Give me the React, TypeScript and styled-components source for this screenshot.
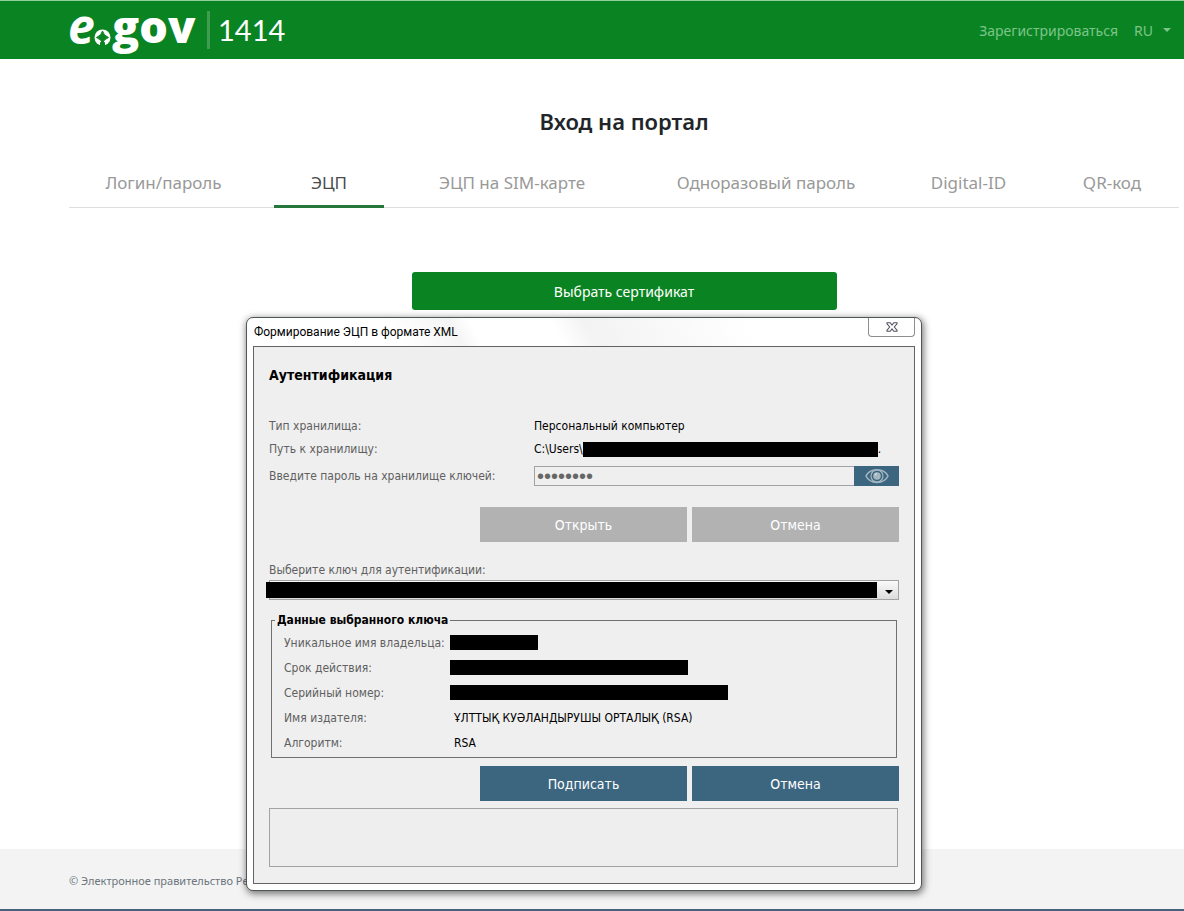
import React from "react";
import styled, { createGlobalStyle } from "styled-components";

const siteFont = `"Noto Sans", "Open Sans", sans-serif`;
const dialogFont = `"DejaVu Sans Condensed", "DejaVu Sans", sans-serif`;
const green = "#0a8422";
const steel = "#3c6680";

const GlobalStyle = createGlobalStyle`
  *, *::before, *::after { box-sizing: border-box; }
  body { margin: 0; background: #fff; font-family: ${siteFont}; }
  button, input, select, textarea { font: inherit; border-radius: 0; margin: 0; }
`;

const Page = styled.div`
  position: relative;
  display: flex;
  flex-direction: column;
  min-height: 100vh;
`;

const Header = styled.header`
  display: flex;
  align-items: center;
  justify-content: space-between;
  height: 59px;
  padding: 0 13px 0 69px;
  background: ${green};
  border-top: 1px solid #8fcf9b;
`;

const Brand = styled.a`
  display: flex;
  align-items: center;
  color: #fff;
  text-decoration: none;
`;

const Logo = styled.svg`
  display: block;
  width: 138px;
  height: 58px;
  overflow: visible;
`;

const Hotline = styled.span`
  padding-left: 8px;
  border-left: 3px solid #3f9c50;
  font-family: Lato, sans-serif;
  font-size: 29px;
  line-height: 38px;
`;

const UserNav = styled.nav`
  display: flex;
  align-items: center;
  gap: 16px;
  font-size: 14px;
`;

const NavLink = styled.a`
  color: #7cc489;
  text-decoration: none;
`;

const LangButton = styled.button`
  display: flex;
  align-items: center;
  gap: 10px;
  padding: 0;
  border: 0;
  background: none;
  color: #7cc489;
`;

const Caret = styled.span`
  border: 4px solid transparent;
  border-top-color: currentColor;
  border-bottom: 0;
`;

const Main = styled.main`
  flex: 1;
  padding: 46px 5px 0 69px;
`;

const Title = styled.h1`
  margin: 0;
  color: #212529;
  font-size: 22px;
  font-weight: 600;
  line-height: 32px;
  text-align: center;
`;

const Tabs = styled.nav`
  display: flex;
  margin-top: 22px;
  border-bottom: 1px solid #dedede;
`;

const Tab = styled.a<{ $share: number; $gap?: boolean; $active?: boolean }>`
  flex: ${(p) => p.$share} 1 0;
  margin: 0 ${(p) => (p.$gap ? 16 : 0)}px -1px 0;
  padding: 5px 0 3px;
  border-bottom: 3px solid ${(p) => (p.$active ? "#25773a" : "transparent")};
  color: ${(p) => (p.$active ? "#4a4a4a" : "#999")};
  font-size: 17px;
  line-height: 38px;
  text-align: center;
  text-decoration: none;
  white-space: nowrap;
`;

const CertButton = styled.button`
  display: block;
  width: 425px;
  max-width: 100%;
  height: 38px;
  margin: 64px auto 0;
  border: 0;
  border-radius: 3px;
  background: ${green};
  color: #fff;
  font-size: 14px;
`;

const Footer = styled.footer`
  padding: 20px 69px 16px;
  background: #f3f3f3;
  border-bottom: 2px solid #48617c;
  color: #6c757d;
  font-size: 11px;
  line-height: 24px;
`;

const Dialog = styled.section`
  position: absolute;
  top: 317px;
  left: 246px;
  width: 676px;
  padding: 0 6px 6px;
  border: 1px solid #4e5657;
  border-radius: 7px;
  background: #fff;
  box-shadow: 1px 2px 7px 1px rgba(0, 0, 0, 0.5);
  color: #000;
  font-family: ${dialogFont};
  font-size: 12px;
`;

const TitleBar = styled.div`
  display: flex;
  align-items: flex-start;
  justify-content: space-between;
  height: 28px;
  background: linear-gradient(60deg, #fff 22%, #f5f5f5 31%, #fff 34%, #fff 46%, #f3f3f3 51%, #fff 75%);
`;

const DialogTitle = styled.h2`
  margin: 0;
  padding-left: 1px;
  font-family: Roboto, "Open Sans", sans-serif;
  font-size: 12px;
  font-weight: 400;
  line-height: 28px;
`;

const CloseButton = styled.button`
  display: grid;
  place-items: center;
  width: 47px;
  height: 19px;
  padding: 0;
  border: 1px solid #8e8e8e;
  border-top: 0;
  && { border-radius: 0 0 4px 4px; }
  background: #fff;
`;

const Panel = styled.div`
  padding: 14px 15px 16px;
  border: 1px solid #636363;
  background: #efefef;
`;

const Heading = styled.h3`
  margin: 0 0 25px;
  font-size: 14px;
  line-height: 28px;
`;

const Field = styled.div<{ $height: number; $top?: number }>`
  display: grid;
  grid-template-columns: 265px 1fr;
  align-items: center;
  height: ${(p) => p.$height}px;
  margin-top: ${(p) => p.$top ?? 0}px;
`;

const Label = styled.label`
  color: #606060;
  line-height: 18px;
  white-space: nowrap;
`;

const Value = styled.span`
  display: flex;
  align-items: center;
  white-space: nowrap;
`;

const Redaction = styled.span<{ $width: number }>`
  width: ${(p) => p.$width}px;
  height: 15px;
  background: #000;
`;

const PasswordBox = styled.div`
  display: flex;
  height: 20px;
`;

const PasswordInput = styled.input`
  flex: 1;
  min-width: 0;
  padding: 0 2px;
  border: 1px solid #a3a3a3;
  border-right: 0;
  background: #efefef;
  color: #666;
  font-family: "Liberation Sans", sans-serif;
  font-size: 20px;
`;

const EyeButton = styled.button`
  display: grid;
  place-items: center;
  width: 45px;
  padding: 0;
  border: 0;
  background: ${steel};
`;

const Actions = styled.div<{ $top: number }>`
  display: grid;
  grid-template-columns: 207px 207px;
  justify-content: end;
  gap: 5px;
  margin-top: ${(p) => p.$top}px;
`;

const ActionButton = styled.button`
  height: 35px;
  padding: 0;
  border: 0;
  background: ${steel};
  color: #fff;
  font-size: 14px;

  &:disabled {
    background: #b2b2b2;
    color: #fff;
  }
`;

const KeyLabel = styled(Label)`
  display: block;
  margin-top: 19px;
`;

const KeyPicker = styled.div`
  position: relative;
  height: 20px;
  margin-top: 1px;
`;

const KeySelect = styled.select`
  display: block;
  width: 100%;
  height: 20px;
  appearance: none;
  border: 1px solid #a3a3a3;
  background: linear-gradient(#fafafa, #dcdcdc);
`;

const KeyMask = styled.span`
  position: absolute;
  top: 2px;
  right: 22px;
  bottom: 2px;
  left: -3px;
  background: #000;
`;

const KeyArrow = styled.span`
  position: absolute;
  top: 10px;
  right: 6px;
  border: 4px solid transparent;
  border-top-color: #000;
  border-bottom: 0;
  pointer-events: none;
`;

const KeyData = styled.fieldset`
  min-width: 0;
  margin: 11px 2px 0;
  padding: 1px 12px 2px;
  border: 1px solid #707070;
`;

const Legend = styled.legend`
  margin-left: -9px;
  padding: 0 2px;
  font-size: 12px;
  font-weight: 700;
  line-height: 18px;
`;

const DataTable = styled.table`
  border-collapse: collapse;
`;

const DataLabel = styled.th`
  width: 166px;
  height: 25px;
  padding: 0;
  color: #606060;
  font-weight: 400;
  text-align: left;
  white-space: nowrap;
`;

const DataValue = styled.td<{ $text?: boolean }>`
  height: 25px;
  padding: 0 0 0 ${(p) => (p.$text ? 4 : 0)}px;
  white-space: nowrap;
`;

const Output = styled.textarea`
  display: block;
  width: 629px;
  max-width: 100%;
  height: 59px;
  margin-top: 7px;
  border: 1px solid #a3a3a3;
  background: #eee;
  resize: none;
`;

const tabs = [
  { text: "Логин/пароль", share: 189, gap: true },
  { text: "ЭЦП", share: 110, gap: true, active: true },
  { text: "ЭЦП на SIM-карте", share: 224, gap: true },
  { text: "Одноразовый пароль", share: 252 },
  { text: "Digital-ID", share: 153 },
  { text: "QR-код", share: 134 },
];

const keyData: { label: string; text?: string; width?: number }[] = [
  { label: "Уникальное имя владельца:", width: 88 },
  { label: "Срок действия:", width: 238 },
  { label: "Серийный номер:", width: 278 },
  { label: "Имя издателя:", text: "ҰЛТТЫҚ КУӘЛАНДЫРУШЫ ОРТАЛЫҚ (RSA)" },
  { label: "Алгоритм:", text: "RSA" },
];

const EgovLogo = () => (
  <Logo viewBox="0 0 138 58" role="img" aria-label="e.gov">
    <g fill="#fff" fontFamily="'Open Sans', sans-serif">
      <text x="-1" y="43" fontStyle="italic" fontWeight="700" fontSize="48">e</text>
      <text x="43" y="42" fontWeight="800" fontSize="45">gov</text>
    </g>
    <circle cx="33.5" cy="36.5" r="8" fill="#fff" />
    <path
      d="M33.5 30 Q34.500 34.500 39.500 36.500 Q34.500 38.500 33.500 42 Q32.500 38.500 27.500 36.500 Q32.500 34.500 33.500 30 Z M31.500 41.500 h4 v3.500 h-4 Z"
      fill={green}
      stroke={green}
    />
  </Logo>
);

const CloseIcon = () => (
  <svg width="12" height="10" viewBox="0 0 12 10">
    <path
      d="M1 .7H4.2L6 3 7.800 .7H11V1.800L8.300 5 11 8.200V9.300H7.800L6 7 4.200 9.300H1V8.200L3.700 5 1 1.800Z"
      fill="#fff"
      stroke="#50525f"
      strokeWidth="1.1"
    />
  </svg>
);

const EyeIcon = () => (
  <svg width="24" height="16" viewBox="0 0 24 16" fill="none" stroke="#a5b8c2">
    <path d="M1 8C5-.5 19-.5 23 8C19 16.500 5 16.500 1 8Z" strokeWidth="1.500" />
    <circle cx="12" cy="8" r="6" strokeWidth="1.200" />
    <circle cx="12" cy="8" r="3.800" fill="#a5b8c2" stroke="none" />
    <path d="M10 7.500a2 2 0 0 1 2-2" stroke="#e0e7ea" />
  </svg>
);

export default function App() {
  return (
    <>
      <GlobalStyle />
      <Page>
        <Header>
          <Brand href="#">
            <EgovLogo />
            <Hotline>1414</Hotline>
          </Brand>
          <UserNav>
            <NavLink href="#">Зарегистрироваться</NavLink>
            <LangButton type="button">
              RU <Caret />
            </LangButton>
          </UserNav>
        </Header>

        <Main>
          <Title>Вход на портал</Title>
          <Tabs>
            {tabs.map((t) => (
              <Tab key={t.text} href="#" $share={t.share} $gap={t.gap} $active={t.active}>
                {t.text}
              </Tab>
            ))}
          </Tabs>
          <CertButton type="button">Выбрать сертификат</CertButton>
        </Main>

        <Footer>© Электронное правительство Республики Казахстан</Footer>

        <Dialog role="dialog" aria-labelledby="dialog-title">
          <TitleBar>
            <DialogTitle id="dialog-title">Формирование ЭЦП в формате XML</DialogTitle>
            <CloseButton type="button" aria-label="Закрыть">
              <CloseIcon />
            </CloseButton>
          </TitleBar>
          <Panel>
            <Heading>Аутентификация</Heading>
            <Field $height={24}>
              <Label as="span">Тип хранилища:</Label>
              <Value>Персональный компьютер</Value>
            </Field>
            <Field $height={22}>
              <Label as="span">Путь к хранилищу:</Label>
              <Value>
                C:\Users\
                <Redaction $width={295} />.
              </Value>
            </Field>
            <Field $height={20} $top={6}>
              <Label htmlFor="password">Введите пароль на хранилище ключей:</Label>
              <PasswordBox>
                <PasswordInput id="password" type="password" defaultValue="password" />
                <EyeButton type="button" aria-label="Показать пароль">
                  <EyeIcon />
                </EyeButton>
              </PasswordBox>
            </Field>
            <Actions $top={21}>
              <ActionButton type="button" disabled>Открыть</ActionButton>
              <ActionButton type="button" disabled>Отмена</ActionButton>
            </Actions>

            <KeyLabel htmlFor="key">Выберите ключ для аутентификации:</KeyLabel>
            <KeyPicker>
              <KeySelect id="key">
                <option />
              </KeySelect>
              <KeyMask />
              <KeyArrow />
            </KeyPicker>

            <KeyData>
              <Legend>Данные выбранного ключа</Legend>
              <DataTable>
                <tbody>
                  {keyData.map((row) => (
                    <tr key={row.label}>
                      <DataLabel scope="row">{row.label}</DataLabel>
                      <DataValue $text={!!row.text}>
                        {row.text ?? (
                          <Value>
                            <Redaction $width={row.width ?? 0} />
                          </Value>
                        )}
                      </DataValue>
                    </tr>
                  ))}
                </tbody>
              </DataTable>
            </KeyData>

            <Actions $top={8}>
              <ActionButton type="button">Подписать</ActionButton>
              <ActionButton type="button">Отмена</ActionButton>
            </Actions>
            <Output aria-label="Сообщения" readOnly />
          </Panel>
        </Dialog>
      </Page>
    </>
  );
}
